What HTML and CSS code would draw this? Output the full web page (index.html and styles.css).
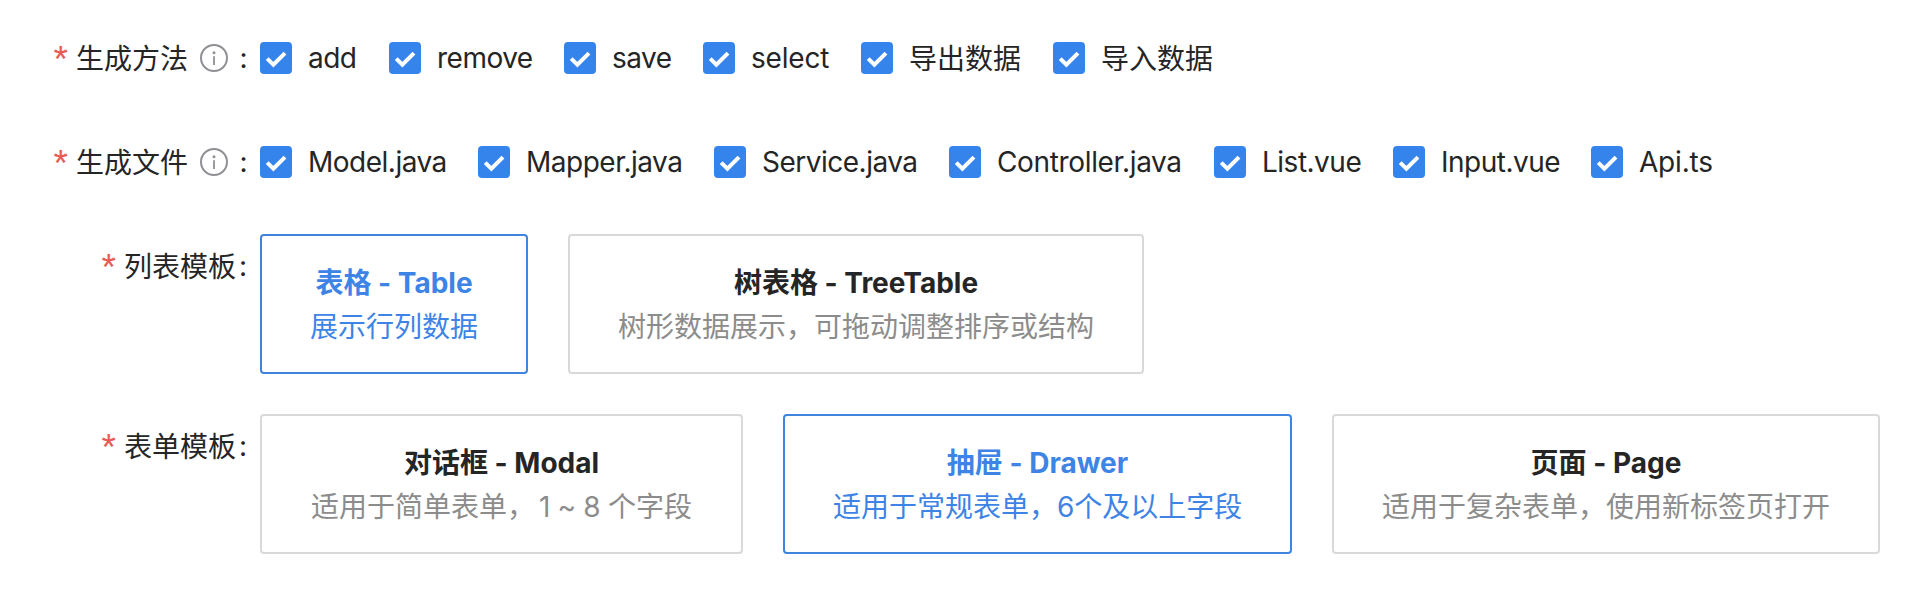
FILE: index.html
```html
<!DOCTYPE html>
<html lang="zh-CN">
<head>
<meta charset="utf-8">
<title>代码生成</title>
<link rel="stylesheet" href="styles.css">
</head>
<body>
<svg class="sprite" aria-hidden="true">
  <symbol id="check" viewBox="0 0 32 32"><path d="M7.2 16.6L13.4 22.7L25 11.1" fill="none" stroke="#fff" stroke-width="4"/></symbol>
  <symbol id="info" viewBox="0 0 28 28"><circle cx="14" cy="14" r="13" fill="none" stroke="#8f8f94" stroke-width="2"/><circle cx="14" cy="8.7" r="1.5" fill="#8f8f94"/><path d="M14 12.2V21" stroke="#8f8f94" stroke-width="1.8"/></symbol>
</svg>
<form class="form">
  <div class="row">
    <div class="label"><span class="star">*</span><span class="name">生成方法</span><svg class="info"><use href="#info"/></svg><span class="colon">:</span></div>
    <div class="options">
      <label class="option"><svg class="box"><use href="#check"/></svg><span class="text w-add">add</span></label>
      <label class="option"><svg class="box"><use href="#check"/></svg><span class="text w-remove">remove</span></label>
      <label class="option"><svg class="box"><use href="#check"/></svg><span class="text w-save">save</span></label>
      <label class="option"><svg class="box"><use href="#check"/></svg><span class="text w-select">select</span></label>
      <label class="option"><svg class="box"><use href="#check"/></svg><span class="text cjk">导出数据</span></label>
      <label class="option"><svg class="box"><use href="#check"/></svg><span class="text cjk">导入数据</span></label>
    </div>
  </div>
  <div class="row">
    <div class="label"><span class="star">*</span><span class="name">生成文件</span><svg class="info"><use href="#info"/></svg><span class="colon">:</span></div>
    <div class="options">
      <label class="option"><svg class="box"><use href="#check"/></svg><span class="text w-model">Model.java</span></label>
      <label class="option"><svg class="box"><use href="#check"/></svg><span class="text w-mapper">Mapper.java</span></label>
      <label class="option"><svg class="box"><use href="#check"/></svg><span class="text w-service">Service.java</span></label>
      <label class="option"><svg class="box"><use href="#check"/></svg><span class="text w-controller">Controller.java</span></label>
      <label class="option"><svg class="box"><use href="#check"/></svg><span class="text w-list">List.vue</span></label>
      <label class="option"><svg class="box"><use href="#check"/></svg><span class="text w-input">Input.vue</span></label>
      <label class="option"><svg class="box"><use href="#check"/></svg><span class="text w-api">Api.ts</span></label>
    </div>
  </div>
  <div class="row row-cards">
    <div class="label"><span class="star">*</span><span class="name">列表模板</span><span class="colon">:</span></div>
    <div class="cards">
      <div class="card active"><div class="title">表格 - Table</div><div class="desc">展示行列数据</div></div>
      <div class="card"><div class="title">树表格 - TreeTable</div><div class="desc">树形数据展示，可拖动调整排序或结构</div></div>
    </div>
  </div>
  <div class="row row-cards">
    <div class="label"><span class="star">*</span><span class="name">表单模板</span><span class="colon">:</span></div>
    <div class="cards">
      <div class="card card-modal"><div class="title">对话框 - Modal</div><div class="desc">适用于简单表单，<span class="range">1 ~ 8</span> 个字段</div></div>
      <div class="card card-drawer active"><div class="title">抽屉 - Drawer</div><div class="desc">适用于常规表单，6个及以上字段</div></div>
      <div class="card"><div class="title">页面 - Page</div><div class="desc">适用于复杂表单，使用新标签页打开</div></div>
    </div>
  </div>
</form>
</body>
</html>
```
FILE: styles.css
```css
* { box-sizing: border-box; }
body {
  margin: 0;
  background: #fff;
  color: #252525;
  font: 28px/44px Inter, "Noto Sans CJK SC", sans-serif;
}
.sprite { display: none; }
.form { padding-top: 26px; }
.row { display: flex; height: 104px; }
.row-cards { height: 180px; }
.label {
  display: flex;
  flex: none;
  justify-content: flex-end;
  align-items: center;
  width: 260px;
  height: 64px;
  padding-right: 10px;
  white-space: nowrap;
}
.star {
  margin-right: 8px;
  padding-top: 3px;
  color: #e85a55;
  font-family: "Liberation Sans", sans-serif;
  font-size: 37px;
  line-height: 34px;
}
.name, .cjk { padding-top: 1px; }
.info { width: 28px; height: 28px; margin: 0 9px 0 12px; }
.colon { width: 14px; text-align: center; }
.info + .colon { width: 13px; }
.options { display: flex; height: 64px; align-items: center; }
.option { display: flex; align-items: center; margin-right: 16px; }
.box { width: 32px; height: 32px; border-radius: 4px; background: #3584ec; }
.text { margin: 0 16px; white-space: nowrap; letter-spacing: -0.5px; }
.text.cjk { letter-spacing: 0; }
.w-add { width: 49px; }
.w-remove { width: 95px; }
.w-save { width: 59px; }
.w-select { width: 78px; letter-spacing: -0.2px; }
.w-model { width: 138px; }
.w-mapper { width: 156px; }
.w-service { width: 155px; }
.w-controller { width: 185px; letter-spacing: -0.35px; }
.w-list { width: 99px; }
.w-input { width: 118px; }
.w-api { letter-spacing: -0.2px; }
.cards { display: flex; align-items: flex-start; gap: 40px; }
.card {
  flex: none;
  height: 140px;
  padding: 25px 48px 23px;
  border: 2px solid #d9d9d9;
  border-radius: 4px;
  text-align: center;
  white-space: nowrap;
}
.card-modal { width: 483px; }
.range { margin-left: 4px; letter-spacing: -0.4px; }
.card-drawer { width: 509px; }
.title { font-weight: 700; }
.desc { color: #8c8c8c; }
.active { border-color: #3f84dd; color: #3d84e6; }
.active .desc { color: inherit; }
```
